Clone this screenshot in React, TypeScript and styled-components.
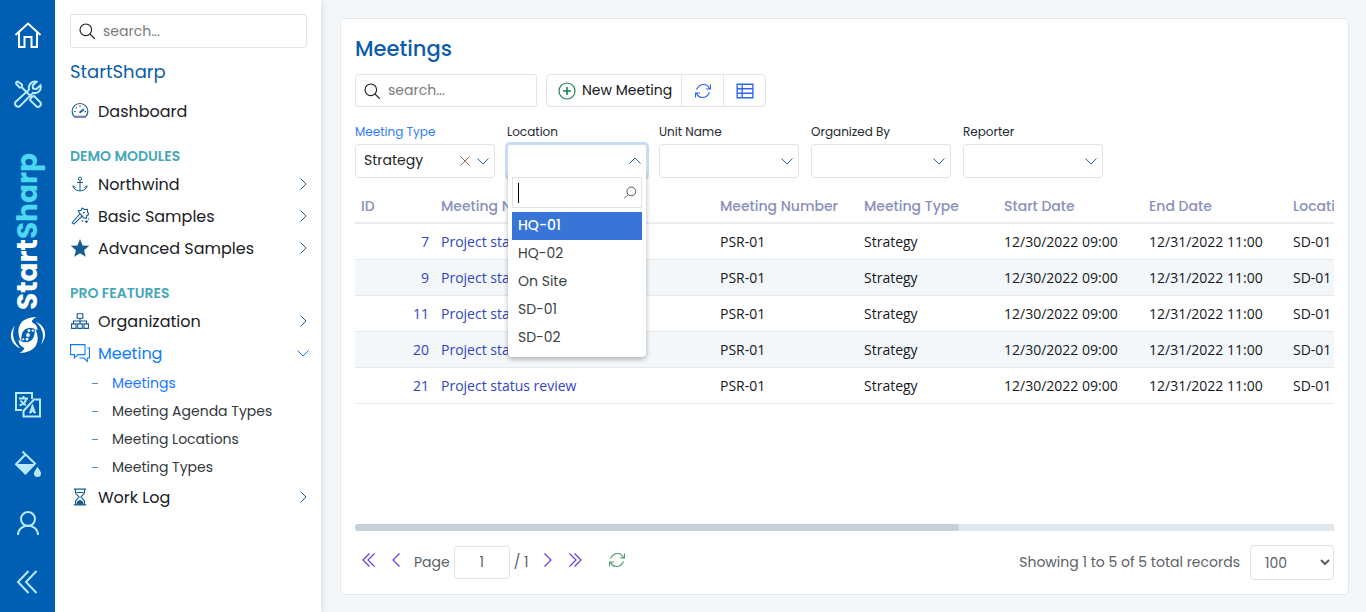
import React from "react";
import styled, { createGlobalStyle, css } from "styled-components";

const GlobalStyle = createGlobalStyle`
  *, *::before, *::after { box-sizing: border-box; }
  body {
    margin: 0;
    background: #f4f7fa;
    color: #212529;
    font-family: Poppins, Inter, "Liberation Sans", sans-serif;
    font-size: 14px;
  }
  button, input, select { font: inherit; color: inherit; }
  ul { list-style: none; margin: 0; padding: 0; }
  a { text-decoration: none; color: inherit; }
`;

/* ---------- icons ---------- */

const Svg = styled.svg<{ $size: number }>`
  display: block;
  flex: none;
  width: ${(p) => p.$size}px;
  height: ${(p) => p.$size}px;
  fill: none;
  stroke: currentColor;
`;

type IconProps = { size: number; name: IconName; weight?: number; box?: number };

const shapes = {
  home: (
    <path d="M1.500 14 14 2.500 26.500 14M5 11.500V26h5.500V16h7v10H23V11.500" />
  ),
  tools: (
    <>
      <path d="m1.500 3 2-1.500L8 4.500v3l9.500 9.500M8 7.500H5.500L1.500 3" />
      <path d="m17.500 17 2.500-1 6 6a2.700 2.700 0 0 1-4 4l-6-6 1.500-3Z" />
      <path d="M22.500 1.800a6 6 0 0 0-7.300 7.700L2 21.500a3 3 0 0 0 4.300 4.300L19 12.800a6 6 0 0 0 7.500-7.600L22.500 9 19 8.500 18.700 5.500Z" />
    </>
  ),
  translate: (
    <>
      <path d="M18 8V2H2v17h6M9.500 25.500V20L20 8.500h6v17H9.500Z" />
      <path d="M5 7.500h9M9.500 5v2.500M12.500 7.500Q11 13 5.500 14.500M6.500 9.500Q9 13 12 14" />
      <path fill="currentColor" strokeWidth="1" d="m15.500 22 3-8.500 3 8.500h-1.500l-1.500-2-1.500 2Z" />
    </>
  ),
  fill: (
    <>
      <path d="m8.500 1.500 12.500 12L11.500 23.500 2 14.200 11 5" />
      <path fill="currentColor" stroke="none" d="M2.500 14h18l-9 9.500Z" />
      <path fill="currentColor" stroke="none" d="M23.500 17q3.500 4.500 3.500 6.500a3.500 3.500 0 0 1-7 0q0-2 3.500-6.500Z" />
    </>
  ),
  user: (
    <>
      <circle cx="14" cy="10" r="7" />
      <path d="M4 26a10 9.500 0 0 1 20 0" />
    </>
  ),
  dblLeft: <path d="M14.500 3 4 14l10.500 11M22.500 3 12 14l10.500 11" />,
  search: (
    <>
      <circle cx="6.800" cy="6.800" r="5.800" />
      <path d="m11 11 5 5" />
    </>
  ),
  searchFlip: (
    <>
      <circle cx="9.500" cy="6.200" r="5" />
      <path d="M5.800 9.800 1.500 14" />
    </>
  ),
  gauge: (
    <>
      <path d="M3.300 13.500a7 7 0 1 1 9.400 0Z" />
      <path d="m7.500 9.500 4-3" strokeWidth="1.600" />
      <path d="M8 3.200v1.300M4.300 4.800l.8.800M2.800 8.500h1.300M12 8.500h1.300" />
      <path d="M3 13h10" strokeWidth="1.800" stroke="#7d88ae" />
    </>
  ),
  anchor: (
    <>
      <circle cx="8" cy="2.800" r="1.600" />
      <path d="M8 4.500v10.300M5 6.500h6M1 9.500v1.500q2 4 7 4t7-4V9.500M1 10.500l2.500 1M15 10.500l-2.500 1" />
    </>
  ),
  wand: (
    <>
      <path d="m1 14 7-8 2 2-7.500 7.200Z" />
      <path d="M8 6 6.500 3.500l2.500-.5 1-2 2 1.200L14.500 2l.2 2.500 1.300 2-2 1.200-.5 2.300-2.500-.5L10 8M10.500 5.500l1.500-1" />
      <path d="M12.500 13h2.500M13.700 11.800v2.400M9.500 12.500h1.500M15 10.500h1" />
    </>
  ),
  star: (
    <path
      fill="currentColor"
      stroke="none"
      d="M8 0l2.300 5.700 5.900.4-4.600 3.800 1.500 5.900L8 12.600l-5.100 3.200 1.500-5.900L-.2 6.100l5.900-.4Z"
    />
  ),
  sitemap: (
    <path d="M5.500 1.500h5v4h-5ZM8 5.500v5M2.200 10.500V8h11.600v2.500M.5 10.500h4v4h-4ZM6 10.500h4v4H6ZM11.500 10.500h4v4h-4Z" />
  ),
  chat: (
    <path d="M.5 1.500h13v9H7l-3 3v-3H.5ZM15.500 4.500h2v9h-2v3l-3-3H8.500" />
  ),
  hourglass: (
    <>
      <path d="M2.500 1h11M2.500 15h11M4 1v3.500L7.200 8 4 11.500V15M12 1v3.500L8.800 8l3.200 3.500V15M5 4h6" />
      <path fill="currentColor" d="M5.500 14.500v-2L8 11l2.500 1.500v2Z" />
    </>
  ),
  right: <path d="m5.500 2.500 5.500 5.500-5.500 5.500" />,
  left: <path d="M10.500 1.500 4 8l6.500 6.500" />,
  pageRight: <path d="M5.500 1.500 12 8l-6.500 6.500" />,
  first: <path d="M8.500 1.500 2 8l6.500 6.500M13.500 1.500 7 8l6.500 6.500" />,
  last: <path d="M2.500 1.500 9 8l-6.500 6.500M7.500 1.500 14 8l-6.500 6.500" />,
  down: <path d="M2.500 5.500 8 11l5.500-5.500" />,
  up: <path d="M2.500 10.500 8 5l5.500 5.500" />,
  clear: <path d="m3.500 3.500 9 9m0-9-9 9" />,
  plus: (
    <>
      <circle cx="9" cy="9" r="8" />
      <path d="M9 5v8M5 9h8" strokeWidth="1.600" />
    </>
  ),
  refresh: (
    <path d="M1.500 6.500Q4 1.500 8.500 1.500t6 4.500M15.500 1.500V6H11M14.500 9.500Q12 14.500 7.500 14.500T1.500 10M.5 14.500V10H5" />
  ),
  grid: (
    <path d="M1 2h14v12H1ZM1 6h14M1 10h14M5.500 2v12" />
  ),
};

type IconName = keyof typeof shapes;

function Icon({ size, name, weight = 1, box = 16 }: IconProps) {
  return (
    <Svg $size={size} viewBox={`0 0 ${box} ${box}`} strokeWidth={weight} aria-hidden="true">
      {shapes[name]}
    </Svg>
  );
}

function Swirl() {
  const blade = "M27 0Q15 0 10 7Q5 15 11 27Q10 17 15 13Q21 9 28 14Q28 8 23 6Q20 4 27 0Z";
  const arc = "M4 9Q-2 17 1 25Q4 31 10 33Q5 29 3 23Q1 16 4 9Z";
  return (
    <Svg $size={36} viewBox="0 0 36 38" aria-hidden="true">
      <g fill="#fff" stroke="none">
        <path d={blade} />
        <path d={arc} />
        <path d={blade} transform="rotate(180 18 19)" />
        <path d={arc} transform="rotate(180 18 19)" />
        <circle cx="18" cy="19" r="2" />
        <circle cx="19" cy="14.500" r="1.500" />
        <circle cx="17" cy="23.500" r="1.500" />
        <circle cx="23" cy="14.500" r="1.200" />
        <circle cx="13" cy="23.500" r="1.200" />
      </g>
    </Svg>
  );
}

/* ---------- frame ---------- */

const Shell = styled.div`
  display: grid;
  grid-template-columns: 55px 266px minmax(0, 1fr);
  min-height: 100vh;
`;

const Rail = styled.nav`
  display: flex;
  flex-direction: column;
  padding: 5px 0 1px;
  background: #005fb2;
`;

const RailLink = styled.a<{ $active?: boolean }>`
  display: flex;
  align-items: center;
  justify-content: center;
  height: 59px;
  color: ${(p) => (p.$active ? "#fff" : "#b9e8ff")};
`;

const Brand = styled.div`
  flex: 1;
  display: flex;
  flex-direction: column;
  align-items: center;
  justify-content: center;
  gap: 6px;
  padding-top: 8px;
`;

const BrandName = styled.span`
  writing-mode: vertical-rl;
  transform: rotate(180deg);
  font-size: 28px;
  line-height: 32px;
  font-weight: 700;
  color: #fff;
  em {
    font-style: normal;
    color: #4cd7f2;
  }
`;

const Sidebar = styled.aside`
  padding: 14px 14px 14px 15px;
  background: #fff;
  box-shadow: 0 0 8px rgba(40, 60, 90, 0.18);
`;

const SearchBox = styled.label<{ $width?: number }>`
  display: flex;
  align-items: center;
  gap: 8px;
  width: ${(p) => (p.$width ? `${p.$width}px` : "auto")};
  height: ${(p) => (p.$width ? 33 : 34)}px;
  padding: 0 8px;
  border: 1px solid #e2e4e8;
  border-radius: 3px;
  background: #fff;
  input {
    flex: 1;
    min-width: 0;
    border: 0;
    padding: 0;
    outline: 0;
    background: none;
  }
  input::placeholder { color: #7a7a7a; opacity: 1; }
`;

const AppTitle = styled.h1`
  margin: 10px 0 9px;
  font-size: 18px;
  line-height: 28px;
  font-weight: 400;
  color: #0b5cab;
`;

const GroupTitle = styled.h2`
  margin: 17px 0 0;
  font-size: 14px;
  line-height: 24px;
  font-weight: 600;
  color: #45a6b8;
`;

const NavLink = styled.a<{ $active?: boolean }>`
  display: grid;
  grid-template-columns: 20px 1fr 8px;
  align-items: center;
  gap: 8px;
  height: 32px;
  font-size: 16px;
  font-weight: 400;
  color: ${(p) => (p.$active ? "#0d7dfb" : "#1a2026")};
  svg { justify-self: center; color: ${(p) => (p.$active ? "#0d7dfb" : "#175c93")}; }
`;

const SubLink = styled.a<{ $active?: boolean }>`
  display: flex;
  align-items: center;
  gap: 14px;
  height: 28px;
  padding-left: 22px;
  color: ${(p) => (p.$active ? "#1a78ff" : "#33383d")};
  &::before {
    content: "";
    width: 6px;
    height: 1px;
    background: #4b93c4;
  }
`;

/* ---------- content ---------- */

const Main = styled.main`
  display: flex;
  padding: 18px 17px 17px 19px;
`;

const Card = styled.section`
  flex: 1;
  min-width: 0;
  display: flex;
  flex-direction: column;
  padding: 14px;
  border: 1px solid #e4e8ec;
  border-radius: 5px;
  background: #fff;
`;

const PageTitle = styled.h2`
  margin: 0;
  font-size: 21px;
  line-height: 31px;
  font-weight: 500;
  color: #0b5cab;
`;

const Toolbar = styled.div`
  display: flex;
  gap: 9px;
  margin-top: 10px;
`;

const ButtonGroup = styled.div`
  display: flex;
  border: 1px solid #e2e4e8;
  border-radius: 4px;
`;

const ToolButton = styled.button<{ $tone?: string }>`
  display: flex;
  align-items: center;
  gap: 6px;
  padding: 0 9px 0 11px;
  border: 0;
  background: none;
  color: #14181c;
  svg { color: ${(p) => p.$tone ?? "#2f63f5"}; }
  & + & {
    justify-content: center;
    width: 42px;
    padding: 0;
    border-left: 1px solid #e2e4e8;
  }
`;

const Filters = styled.div`
  display: flex;
  gap: 12px;
  margin-top: 15px;
`;

const Field = styled.div`
  position: relative;
  width: 140px;
  label {
    display: block;
    font-size: 12px;
    line-height: 20px;
    margin-bottom: 2px;
    color: #23292f;
  }
`;

const ActiveLabel = styled.label`
  && { color: #2f7df6; }
`;

const boxLook = css`
  width: 100%;
  height: 34px;
  padding: 0 8px 2px;
  border: 1px solid #e2e4e8;
  border-radius: 3px;
  background: #fff;
  outline: 0;
`;

const Control = styled.div`
  position: relative;
`;

const Picker = styled.select`
  ${boxLook}
  display: block;
  appearance: none;
`;

const Combo = styled.button`
  ${boxLook}
  display: block;
  border-color: #cfdcee;
  box-shadow: 0 0 0 2px #c8dbf5;
`;

const Adornments = styled.div`
  position: absolute;
  inset: 0 4px 0 auto;
  display: flex;
  align-items: center;
  gap: 2px;
  color: #2b5d9c;
  pointer-events: none;
`;

const ClearButton = styled.button`
  padding: 0;
  border: 0;
  background: none;
  color: #9a6a55;
  pointer-events: auto;
`;

const Dropdown = styled.div`
  position: absolute;
  z-index: 2;
  top: 100%;
  left: 1px;
  right: 1px;
  margin-top: -5px;
  padding: 4px 4px 5px;
  border-radius: 0 0 4px 4px;
  background: #fff;
  box-shadow: 0 2px 5px rgba(0, 0, 0, 0.3);
  clip-path: inset(0 -8px -8px -8px);
`;

const DropdownSearch = styled.div`
  display: flex;
  align-items: center;
  height: 31px;
  margin-bottom: 4px;
  padding: 0 4px 0 5px;
  border: 1px solid #dfe2e6;
  color: #444;
  input {
    flex: 1;
    min-width: 0;
    height: 20px;
    padding: 0;
    border: 0;
    border-left: 1px solid #000;
    outline: 0;
    caret-color: transparent;
  }
`;

const Option = styled.li<{ $active?: boolean }>`
  height: 28px;
  padding: 0 6px;
  line-height: 26px;
  background: ${(p) => (p.$active ? "#3875d7" : "transparent")};
  color: ${(p) => (p.$active ? "#fff" : "#3a3f44")};
  font-weight: ${(p) => (p.$active ? 500 : 400)};
`;

const GridView = styled.div`
  flex: 1;
  overflow: hidden;
  margin-top: 10px;
`;

const Table = styled.table`
  table-layout: fixed;
  width: 1587px;
  border-collapse: separate;
  border-spacing: 0;
  color: #14181c;
  th, td {
    height: 36px;
    padding: 0 6px;
    text-align: left;
    white-space: nowrap;
    border-bottom: 1px solid #e3e9ee;
  }
  th {
    padding-top: 2px;
    font-weight: 500;
    color: #8a90bb;
    border-bottom: 2px solid #e9edf1;
  }
  td { font-family: "Open Sans", "Noto Sans", sans-serif; }
  td:first-child { text-align: right; }
  a { color: #3044c4; }
  tbody tr:nth-child(even) { background: #f3f7fa; }
`;

const ScrollTrack = styled.div`
  height: 7px;
  background: #e2e7ee;
  border-radius: 3px 0 0 3px;
`;

const ScrollThumb = styled.div`
  width: 61.700%;
  height: 100%;
  border-radius: 3px;
  background: #c8ceda;
`;

const Footer = styled.footer`
  display: flex;
  align-items: center;
  height: 35px;
  margin-top: 14px;
  color: #5a5f66;
`;

const PagerButton = styled.button<{ $tone?: string }>`
  display: flex;
  padding: 0 6px;
  margin: 0 0 5px;
  border: 0;
  background: none;
  color: ${(p) => p.$tone ?? "#5a3ff0"};
`;

const PageLabel = styled.label`
  display: flex;
  align-items: center;
  gap: 4px;
  margin: 0 4px 0 3px;
`;

const PageInput = styled.input`
  width: 56px;
  height: 33px;
  border: 1px solid #e2e4e8;
  border-radius: 3px;
  text-align: center;
`;

const RefreshSlot = styled.span`
  margin-left: 14px;
`;

const Status = styled.span`
  margin: 0 10px 0 auto;
`;

const PageSize = styled.select`
  width: 84px;
  height: 35px;
  padding: 0 0 0 10px;
  border: 1px solid #e2e4e8;
  border-radius: 4px;
  background: #fff;
`;

/* ---------- data ---------- */

const columns: [string, number][] = [
  ["ID", 80],
  ["Meeting Name", 279],
  ["Meeting Number", 144],
  ["Meeting Type", 140],
  ["Start Date", 145],
  ["End Date", 144],
  ["Location", 655],
];

const ids = [7, 9, 11, 20, 21];
const locations = ["HQ-01", "HQ-02", "On Site", "SD-01", "SD-02"];
const meetingPages = ["Meetings", "Meeting Agenda Types", "Meeting Locations", "Meeting Types"];

type Item = { icon: IconName; text: string; size?: number; box?: number };

function NavItem({ icon, text, size = 18, box, open, leaf }: Item & { open?: boolean; leaf?: boolean }) {
  return (
    <NavLink href="#" $active={open}>
      <Icon name={icon} size={size} box={box} />
      <span>{text}</span>
      {!leaf && <Icon name={open ? "down" : "right"} size={16} />}
    </NavLink>
  );
}

function EmptyFilter({ label }: { label: string }) {
  const id = label.replace(" ", "-").toLowerCase();
  return (
    <Field>
      <label htmlFor={id}>{label}</label>
      <Control>
        <Picker id={id} />
        <Adornments>
          <Icon name="down" size={16} />
        </Adornments>
      </Control>
    </Field>
  );
}

export default function App() {
  return (
    <>
      <GlobalStyle />
      <Shell>
        <Rail>
          <RailLink href="#" $active aria-label="Home">
            <Icon name="home" size={28} box={28} weight={2} />
          </RailLink>
          <RailLink href="#" aria-label="Tools">
            <Icon name="tools" size={28} box={28} weight={2} />
          </RailLink>
          <Brand>
            <BrandName>
              Start<em>Sharp</em>
            </BrandName>
            <Swirl />
          </Brand>
          <RailLink href="#" aria-label="Language">
            <Icon name="translate" size={28} box={28} weight={2} />
          </RailLink>
          <RailLink href="#" aria-label="Theme">
            <Icon name="fill" size={28} box={28} weight={2} />
          </RailLink>
          <RailLink href="#" aria-label="Account">
            <Icon name="user" size={28} box={28} weight={2} />
          </RailLink>
          <RailLink href="#" aria-label="Collapse">
            <Icon name="dblLeft" size={28} box={28} weight={2} />
          </RailLink>
        </Rail>

        <Sidebar>
          <SearchBox>
            <Icon name="search" size={16} weight={1.2} />
            <input type="text" placeholder="search..." aria-label="Search menu" />
          </SearchBox>
          <AppTitle>StartSharp</AppTitle>
          <NavItem icon="gauge" text="Dashboard" leaf />
          <GroupTitle>DEMO MODULES</GroupTitle>
          <NavItem icon="anchor" text="Northwind" size={16} />
          <NavItem icon="wand" text="Basic Samples" />
          <NavItem icon="star" text="Advanced Samples" />
          <GroupTitle>PRO FEATURES</GroupTitle>
          <NavItem icon="sitemap" text="Organization" />
          <NavItem icon="chat" text="Meeting" size={20} box={18} open />
          <ul>
            {meetingPages.map((page, i) => (
              <li key={page}>
                <SubLink href="#" $active={i === 0}>{page}</SubLink>
              </li>
            ))}
          </ul>
          <NavItem icon="hourglass" text="Work Log" />
        </Sidebar>

        <Main>
          <Card>
            <PageTitle>Meetings</PageTitle>
            <Toolbar>
              <SearchBox $width={182}>
                <Icon name="search" size={16} weight={1.2} />
                <input type="text" placeholder="search..." aria-label="Search meetings" />
              </SearchBox>
              <ButtonGroup>
                <ToolButton $tone="#1f8354">
                  <Icon name="plus" size={18} box={18} weight={1.2} />
                  New Meeting
                </ToolButton>
                <ToolButton aria-label="Refresh">
                  <Icon name="refresh" size={16} weight={1.2} />
                </ToolButton>
                <ToolButton aria-label="Columns">
                  <Icon name="grid" size={18} weight={1.2} />
                </ToolButton>
              </ButtonGroup>
            </Toolbar>

            <Filters>
              <Field>
                <ActiveLabel htmlFor="meeting-type">Meeting Type</ActiveLabel>
                <Control>
                  <Picker id="meeting-type">
                    <option>Strategy</option>
                  </Picker>
                  <Adornments>
                    <ClearButton aria-label="Clear">
                      <Icon name="clear" size={16} />
                    </ClearButton>
                    <Icon name="down" size={16} />
                  </Adornments>
                </Control>
              </Field>
              <Field>
                <label htmlFor="location">Location</label>
                <Control>
                  <Combo id="location" aria-haspopup="listbox" aria-expanded />
                  <Adornments>
                    <Icon name="up" size={16} />
                  </Adornments>
                  <Dropdown>
                    <DropdownSearch>
                      <input type="text" aria-label="Find location" />
                      <Icon name="searchFlip" size={14} />
                    </DropdownSearch>
                    <ul role="listbox">
                      {locations.map((name, i) => (
                        <Option key={name} role="option" $active={i === 0}>{name}</Option>
                      ))}
                    </ul>
                  </Dropdown>
                </Control>
              </Field>
              <EmptyFilter label="Unit Name" />
              <EmptyFilter label="Organized By" />
              <EmptyFilter label="Reporter" />
            </Filters>

            <GridView>
              <Table>
                <colgroup>
                  {columns.map(([name, width]) => (
                    <col key={name} width={width} />
                  ))}
                </colgroup>
                <thead>
                  <tr>
                    {columns.map(([name]) => (
                      <th key={name}>{name}</th>
                    ))}
                  </tr>
                </thead>
                <tbody>
                  {ids.map((id) => (
                    <tr key={id}>
                      <td><a href="#">{id}</a></td>
                      <td><a href="#">Project status review</a></td>
                      <td>PSR-01</td>
                      <td>Strategy</td>
                      <td>12/30/2022 09:00</td>
                      <td>12/31/2022 11:00</td>
                      <td>SD-01</td>
                    </tr>
                  ))}
                </tbody>
              </Table>
            </GridView>
            <ScrollTrack>
              <ScrollThumb />
            </ScrollTrack>

            <Footer>
              <PagerButton aria-label="First page"><Icon name="first" size={16} weight={1.2} /></PagerButton>
              <PagerButton aria-label="Previous page"><Icon name="left" size={16} weight={1.2} /></PagerButton>
              <PageLabel>
                Page
                <PageInput type="text" defaultValue="1" />
                / 1
              </PageLabel>
              <PagerButton aria-label="Next page"><Icon name="pageRight" size={16} weight={1.2} /></PagerButton>
              <PagerButton aria-label="Last page"><Icon name="last" size={16} weight={1.2} /></PagerButton>
              <RefreshSlot>
                <PagerButton $tone="#4a9a72" aria-label="Reload"><Icon name="refresh" size={16} weight={1.2} /></PagerButton>
              </RefreshSlot>
              <Status>Showing 1 to 5 of 5 total records</Status>
              <PageSize aria-label="Rows per page" defaultValue="100">
                <option>100</option>
              </PageSize>
            </Footer>
          </Card>
        </Main>
      </Shell>
    </>
  );
}
